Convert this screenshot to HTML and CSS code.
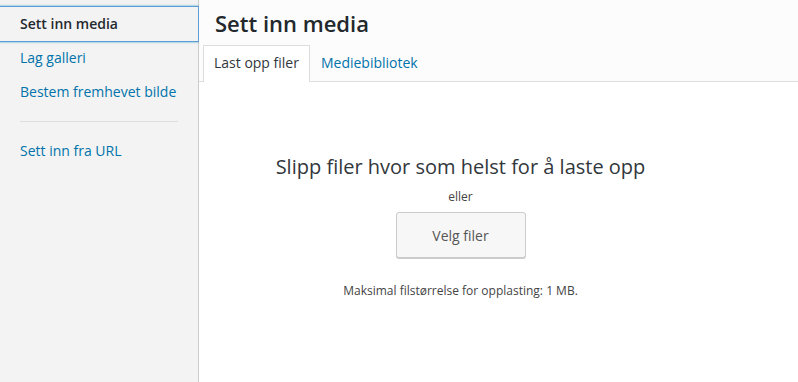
FILE: index.html
```html
<!DOCTYPE html>
<html lang="nb">
<head>
<meta charset="UTF-8">
<meta name="viewport" content="width=device-width, initial-scale=1.0">
<title>Sett inn media</title>
<link rel="stylesheet" href="styles.css">
</head>
<body>

<div class="frame">
    <div class="menu">
        <a class="menu-item active" href="#">Sett inn media</a>
        <a class="menu-item" href="#">Lag galleri</a>
        <a class="menu-item" href="#">Bestem fremhevet bilde</a>
        <div class="separator"></div>
        <a class="menu-item" href="#">Sett inn fra URL</a>
    </div>

    <div class="main">
        <div class="header">
            <h1>Sett inn media</h1>
            <div class="tabs">
                <a class="tab active" href="#">Last opp filer</a>
                <a class="tab" href="#">Mediebibliotek</a>
            </div>
        </div>

        <div class="content">
            <div class="uploader">
                <h2>Slipp filer hvor som helst for å laste opp</h2>
                <p class="or">eller</p>
                <button class="button-hero">Velg filer</button>
                <p class="max-size">Maksimal filstørrelse for opplasting: 1 MB.</p>
            </div>
        </div>
    </div>
</div>

</body>
</html>
```

FILE: styles.css
```css
body {
    margin: 0;
    font-family: "Open Sans", sans-serif;
    color: #444;
    background-color: #fff;
}
.frame {
    display: flex;
    height: 382px;
}
.menu {
    width: 198px;
    flex-shrink: 0;
    background-color: #f3f3f3;
    border-right: 1px solid #ccc;
    padding-top: 7px;
}
.menu-item {
    display: block;
    padding: 8px 20px;
    font-size: 14px;
    line-height: 18px;
    color: #0073aa;
    text-decoration: none;
}
.menu-item.active {
    color: #23282d;
    font-weight: 600;
    box-shadow: 0 0 0 1px #5b9dd9, 0 0 2px 1px rgba(30, 140, 190, 0.8);
}
.separator {
    height: 0;
    border-top: 1px solid #ddd;
    margin: 12px 20px 12px 20px;
}
.main {
    flex: 1;
    display: flex;
    flex-direction: column;
}
.header {
    background-color: #fcfcfc;
    border-bottom: 1px solid #ddd;
    height: 81px;
    display: flex;
    flex-direction: column;
    justify-content: space-between;
}
h1 {
    margin: 0;
    padding: 9px 16px 0 16px;
    font-size: 22px;
    line-height: 28px;
    font-weight: 600;
    color: #23282d;
}
.tabs {
    display: flex;
    padding-left: 4px;
    margin-bottom: -1px;
}
.tab {
    display: block;
    padding: 0 10px;
    height: 35px;
    line-height: 34px;
    font-size: 14px;
    color: #0073aa;
    text-decoration: none;
    border: 1px solid transparent;
    border-bottom: none;
}
.tab.active {
    color: #32373c;
    background-color: #fff;
    border-color: #ddd;
    height: 36px;
}
.content {
    flex: 1;
}
.uploader {
    margin-right: 76px;
    padding-top: 70px;
    text-align: center;
}
h2 {
    margin: 0;
    font-size: 20px;
    line-height: 30px;
    font-weight: 400;
    color: #32373c;
}
.or {
    margin: 4px 0 4px 0;
    font-size: 12px;
    line-height: 22px;
}
.button-hero {
    width: 130px;
    height: 46px;
    font-family: "Open Sans", sans-serif;
    font-size: 14px;
    color: #555;
    background-color: #f7f7f7;
    border: 1px solid #ccc;
    border-radius: 3px;
    box-shadow: 0 1px 0 #ccc;
    cursor: pointer;
}
.max-size {
    margin: 23px 0 0 0;
    font-size: 12px;
    line-height: 20px;
}
```
